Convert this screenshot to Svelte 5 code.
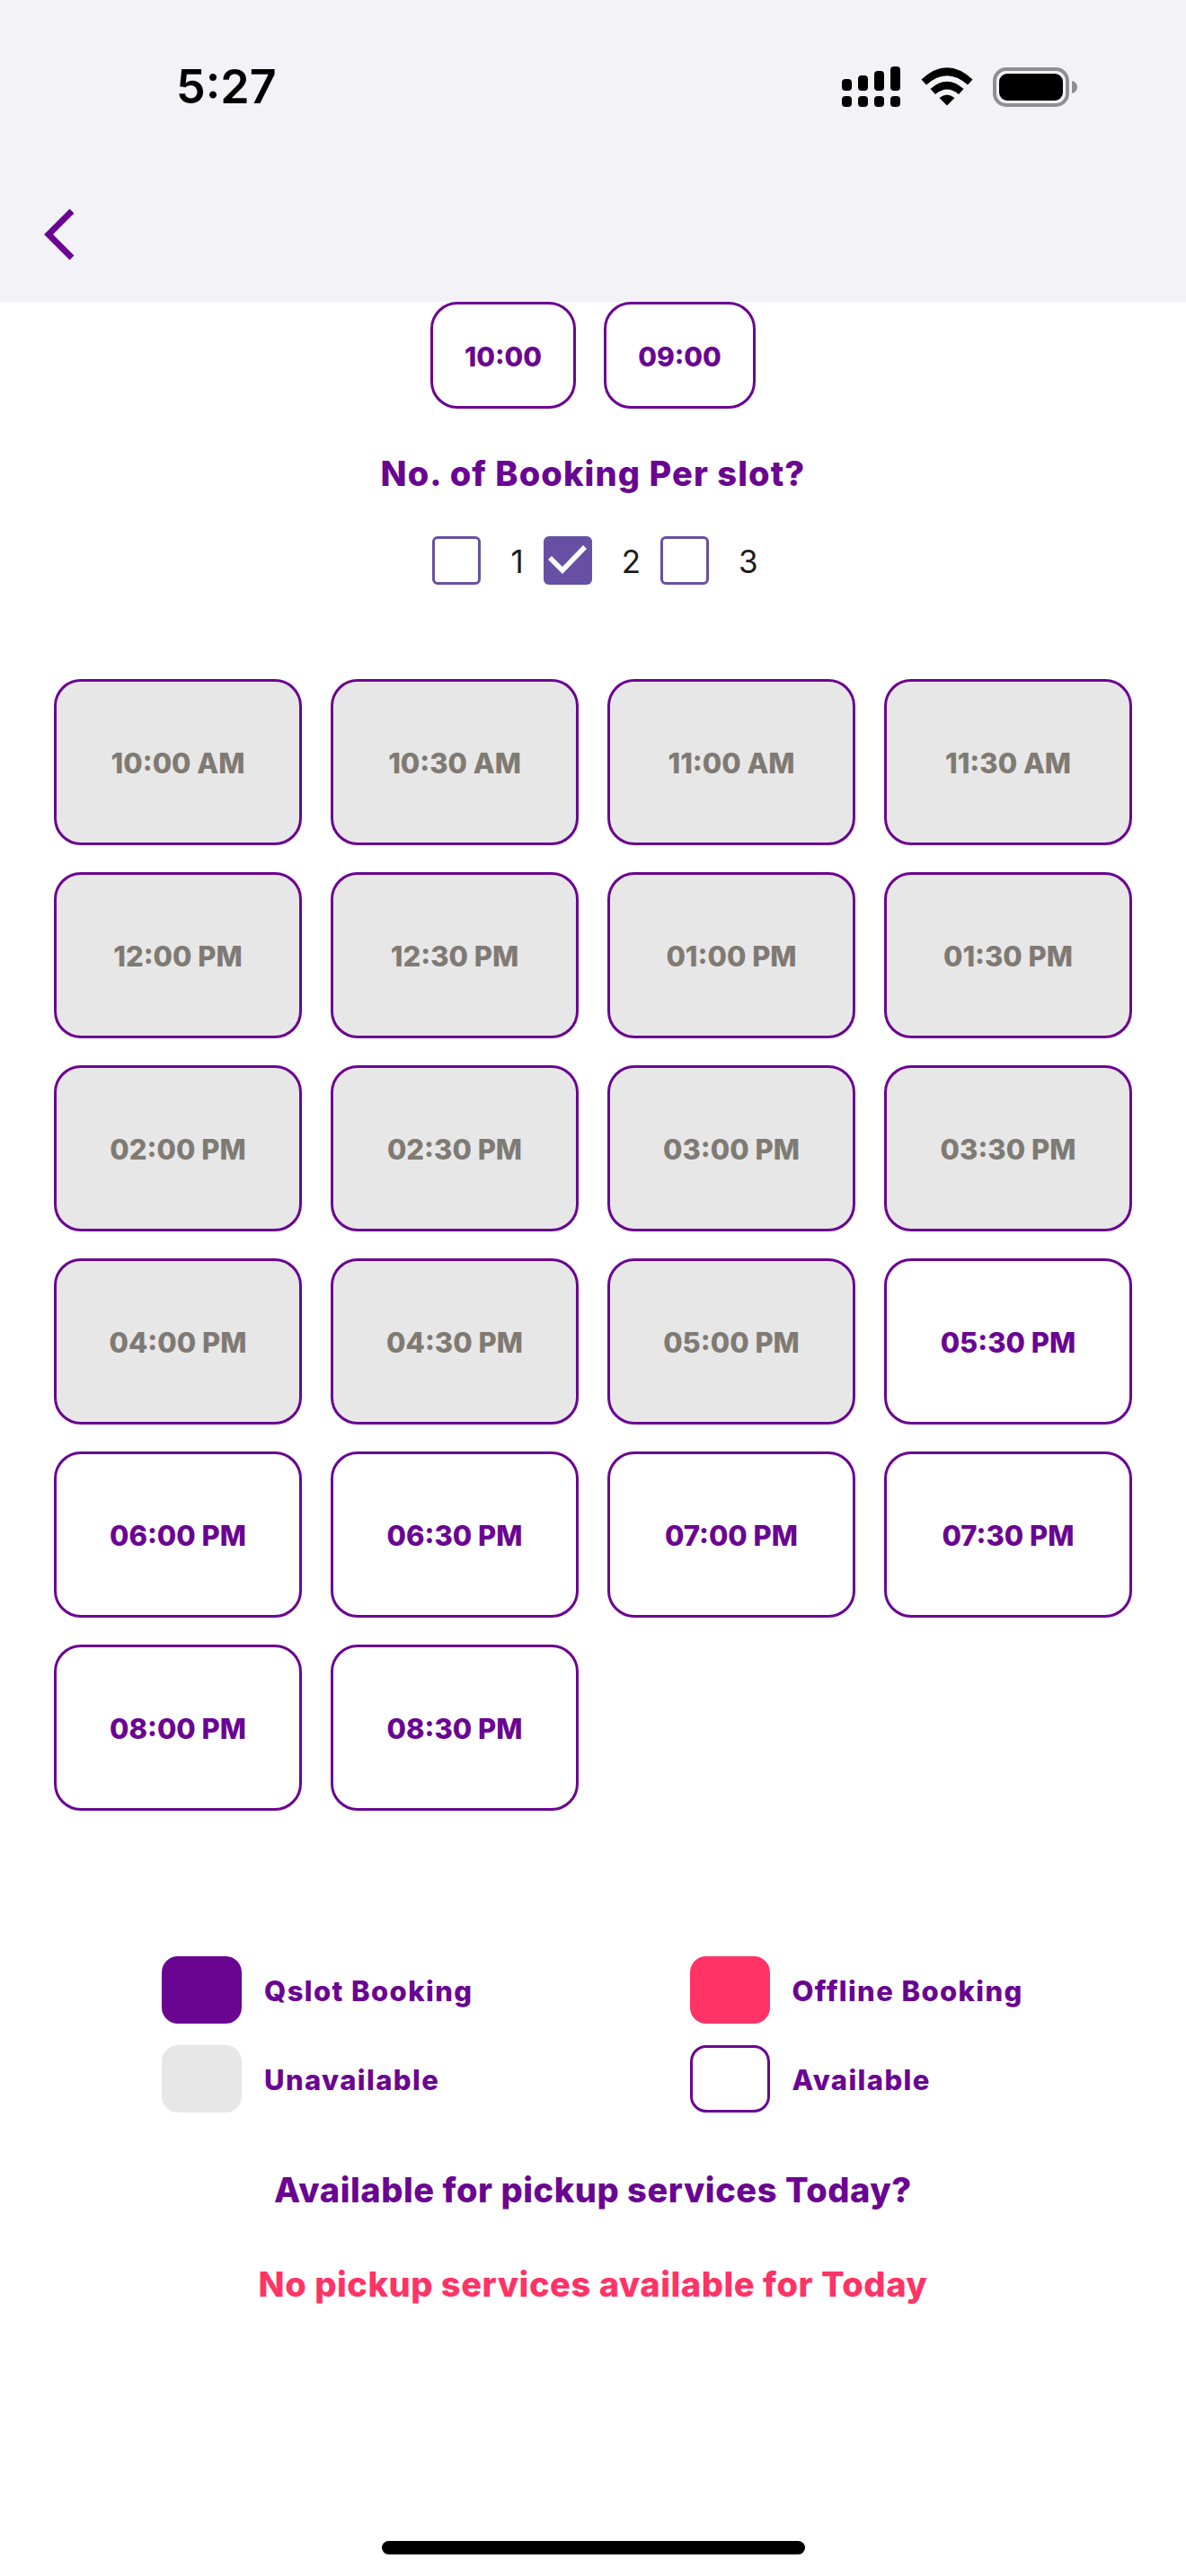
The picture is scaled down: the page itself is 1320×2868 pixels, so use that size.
<script>
  const slots = [
    ['10:00 AM', true], ['10:30 AM', true], ['11:00 AM', true], ['11:30 AM', true],
    ['12:00 PM', true], ['12:30 PM', true], ['01:00 PM', true], ['01:30 PM', true],
    ['02:00 PM', true], ['02:30 PM', true], ['03:00 PM', true], ['03:30 PM', true],
    ['04:00 PM', true], ['04:30 PM', true], ['05:00 PM', true], ['05:30 PM', false],
    ['06:00 PM', false], ['06:30 PM', false], ['07:00 PM', false], ['07:30 PM', false],
    ['08:00 PM', false], ['08:30 PM', false]
  ];
  const options = [
    { n: 1, on: false },
    { n: 2, on: true },
    { n: 3, on: false }
  ];
  const legend = [
    { label: 'Qslot Booking', kind: 'qslot' },
    { label: 'Offline Booking', kind: 'offline' },
    { label: 'Unavailable', kind: 'off' },
    { label: 'Available', kind: 'free' }
  ];
</script>

<div class="screen">
  <header class="top">
    <div class="status">
      <span class="clock">5:27</span>
      <div class="status__icons">
        <svg class="signal" width="65" height="45" viewBox="0 0 65 45" fill="#000">
          <rect x="0" y="14" width="11" height="13" rx="4" />
          <rect x="18" y="10" width="11" height="17" rx="4" />
          <rect x="36" y="5" width="11" height="22" rx="4" />
          <rect x="54" y="0" width="11" height="27" rx="4" />
          <rect x="0" y="33" width="11" height="12" rx="4" />
          <rect x="18" y="33" width="11" height="12" rx="4" />
          <rect x="36" y="33" width="11" height="12" rx="4" />
          <rect x="54" y="33" width="11" height="12" rx="4" />
        </svg>
        <svg class="wifi" width="58" height="43" viewBox="0 0 58 43" fill="#000">
          <path d="M0.5 13.5 Q29 -13 57.500 13.500 L52 19.500 Q29 -1 6 19.500 Z" />
          <path d="M10.500 24 Q29 7.500 47.500 24 L42 30 Q29 19 16 30 Z" />
          <path d="M20.500 34 Q29 27 37.500 34 L29 42.500 Z" />
        </svg>
        <svg class="battery" width="94" height="44" viewBox="0 0 94 44">
          <rect x="2" y="2" width="81" height="40" rx="13" fill="none" stroke="#8e8e93" stroke-width="4" />
          <rect x="7" y="7" width="71" height="30" rx="9" fill="#000" />
          <path d="M88 15 C92 16 94 19 94 22 C94 25 92 28 88 29 Z" fill="#8e8e93" />
        </svg>
      </div>
    </div>
    <button class="back" aria-label="Back">
      <svg width="36" height="60" viewBox="0 0 36 60" fill="none">
        <path d="M33 4 L7 30 L33 56" stroke="#6a0592" stroke-width="7" />
      </svg>
    </button>
  </header>

  <main class="content">
    <div class="hours">
      <div class="hour">10:00</div>
      <div class="hour">09:00</div>
    </div>

    <h2 class="title">No. of Booking Per slot?</h2>

    <div class="options">
      {#each options as opt}
        <span class="check" class:check--on={opt.on}>
          {#if opt.on}
            <svg width="54" height="54" viewBox="0 0 54 54" fill="none">
              <path d="M7 24 L21 38 L46 12" stroke="#fff" stroke-width="5.500" />
            </svg>
          {/if}
        </span>
        <span class="num">{opt.n}</span>
      {/each}
    </div>

    <div class="slots">
      {#each slots as [time, off]}
        <div class="slot" class:slot--off={off}>{time}</div>
      {/each}
    </div>

    <div class="legend">
      {#each legend as item}
        <div class="legend__item">
          <span class="swatch swatch--{item.kind}"></span>
          <span class="legend__label">{item.label}</span>
        </div>
      {/each}
    </div>

    <p class="pickup">Available for pickup services Today?</p>
    <p class="pickup pickup--none">No pickup services available for Today</p>
  </main>

  <div class="home"></div>
</div>

<style>
  :global(body) {
    margin: 0;
    background: #fff;
  }

  .screen {
    height: 2868px;
    display: flex;
    flex-direction: column;
    font-family: Inter, "Open Sans", sans-serif;
    overflow: hidden;
  }

  .top {
    height: 336px;
    flex: none;
    box-sizing: border-box;
    background: #f2f2f7;
    padding-top: 74px;
  }

  .status {
    height: 45px;
    display: flex;
    align-items: center;
    justify-content: space-between;
    padding: 0 121px 0 196px;
  }

  .clock {
    font-size: 52px;
    font-weight: 600;
    line-height: 45px;
    color: #000;
  }

  .status__icons {
    display: flex;
    align-items: center;
  }

  .signal {
    margin-right: 23px;
  }

  .wifi {
    margin-right: 22px;
  }

  .back {
    display: block;
    margin: 112px 0 0 47px;
    padding: 0;
    border: 0;
    background: none;
  }

  .back svg {
    display: block;
  }

  .content {
    flex: 1;
    display: flex;
    flex-direction: column;
    align-items: center;
    padding: 0 60px;
  }

  .hours {
    display: grid;
    grid-template-columns: 162px 169px;
    column-gap: 31px;
  }

  .hour {
    height: 119px;
    box-sizing: border-box;
    display: flex;
    align-items: center;
    justify-content: center;
    padding-top: 2px;
    border: 3px solid #6a0592;
    border-radius: 30px;
    color: #6a0592;
    font-size: 30px;
    font-weight: 800;
  }

  .title {
    margin: 44px 0 0;
    font-size: 38px;
    line-height: 56px;
    letter-spacing: 1.100px;
    font-weight: 800;
    color: #6a0592;
  }

  .options {
    margin-top: 42px;
    height: 54px;
    display: flex;
    align-items: center;
    padding-left: 5px;
    color: #1c1c1c;
  }

  .check {
    width: 54px;
    height: 54px;
    box-sizing: border-box;
    border: 3px solid #6750a4;
    border-radius: 6px;
  }

  .check--on {
    background: #6750a4;
    border: 0;
  }

  .check svg {
    display: block;
  }

  .num {
    padding: 2px 22px 0 33px;
    font-size: 35px;
    font-weight: 400;
  }

  .num:last-child {
    padding-right: 0;
  }

  .slots {
    margin-top: 105px;
    width: 100%;
    display: grid;
    grid-template-columns: repeat(4, 1fr);
    grid-auto-rows: 185px;
    gap: 30px 32px;
  }

  .slot {
    box-sizing: border-box;
    display: flex;
    align-items: center;
    justify-content: center;
    padding-top: 2px;
    border: 3px solid #6a0592;
    border-radius: 30px;
    color: #6a0592;
    font-size: 31px;
    font-weight: 800;
  }

  .slot--off {
    background: #e7e7e7;
    color: #7f7a73;
  }

  .legend {
    margin-top: 162px;
    align-self: flex-start;
    margin-left: 120px;
    display: grid;
    grid-template-columns: 587.500px auto;
    row-gap: 24px;
  }

  .legend__item {
    display: flex;
    align-items: center;
    gap: 25px;
  }

  .swatch {
    width: 89px;
    height: 75px;
    box-sizing: border-box;
    border-radius: 18px;
  }

  .swatch--qslot {
    background: #6a0592;
  }

  .swatch--offline {
    background: #ff3366;
  }

  .swatch--off {
    background: #e7e7e7;
  }

  .swatch--free {
    border: 3px solid #6a0592;
  }

  .legend__label {
    padding-top: 2px;
    font-size: 31px;
    letter-spacing: 1.400px;
    font-weight: 800;
    color: #6a0592;
  }

  .pickup {
    margin: 58px 0 0;
    font-size: 38px;
    line-height: 56px;
    letter-spacing: 0.550px;
    font-weight: 800;
    color: #6a0592;
  }

  .pickup--none {
    margin-top: 49px;
    color: #ff3366;
  }

  .home {
    position: absolute;
    left: 425px;
    top: 2829px;
    width: 471px;
    height: 15px;
    border-radius: 7.500px;
    background: #000;
  }
</style>
